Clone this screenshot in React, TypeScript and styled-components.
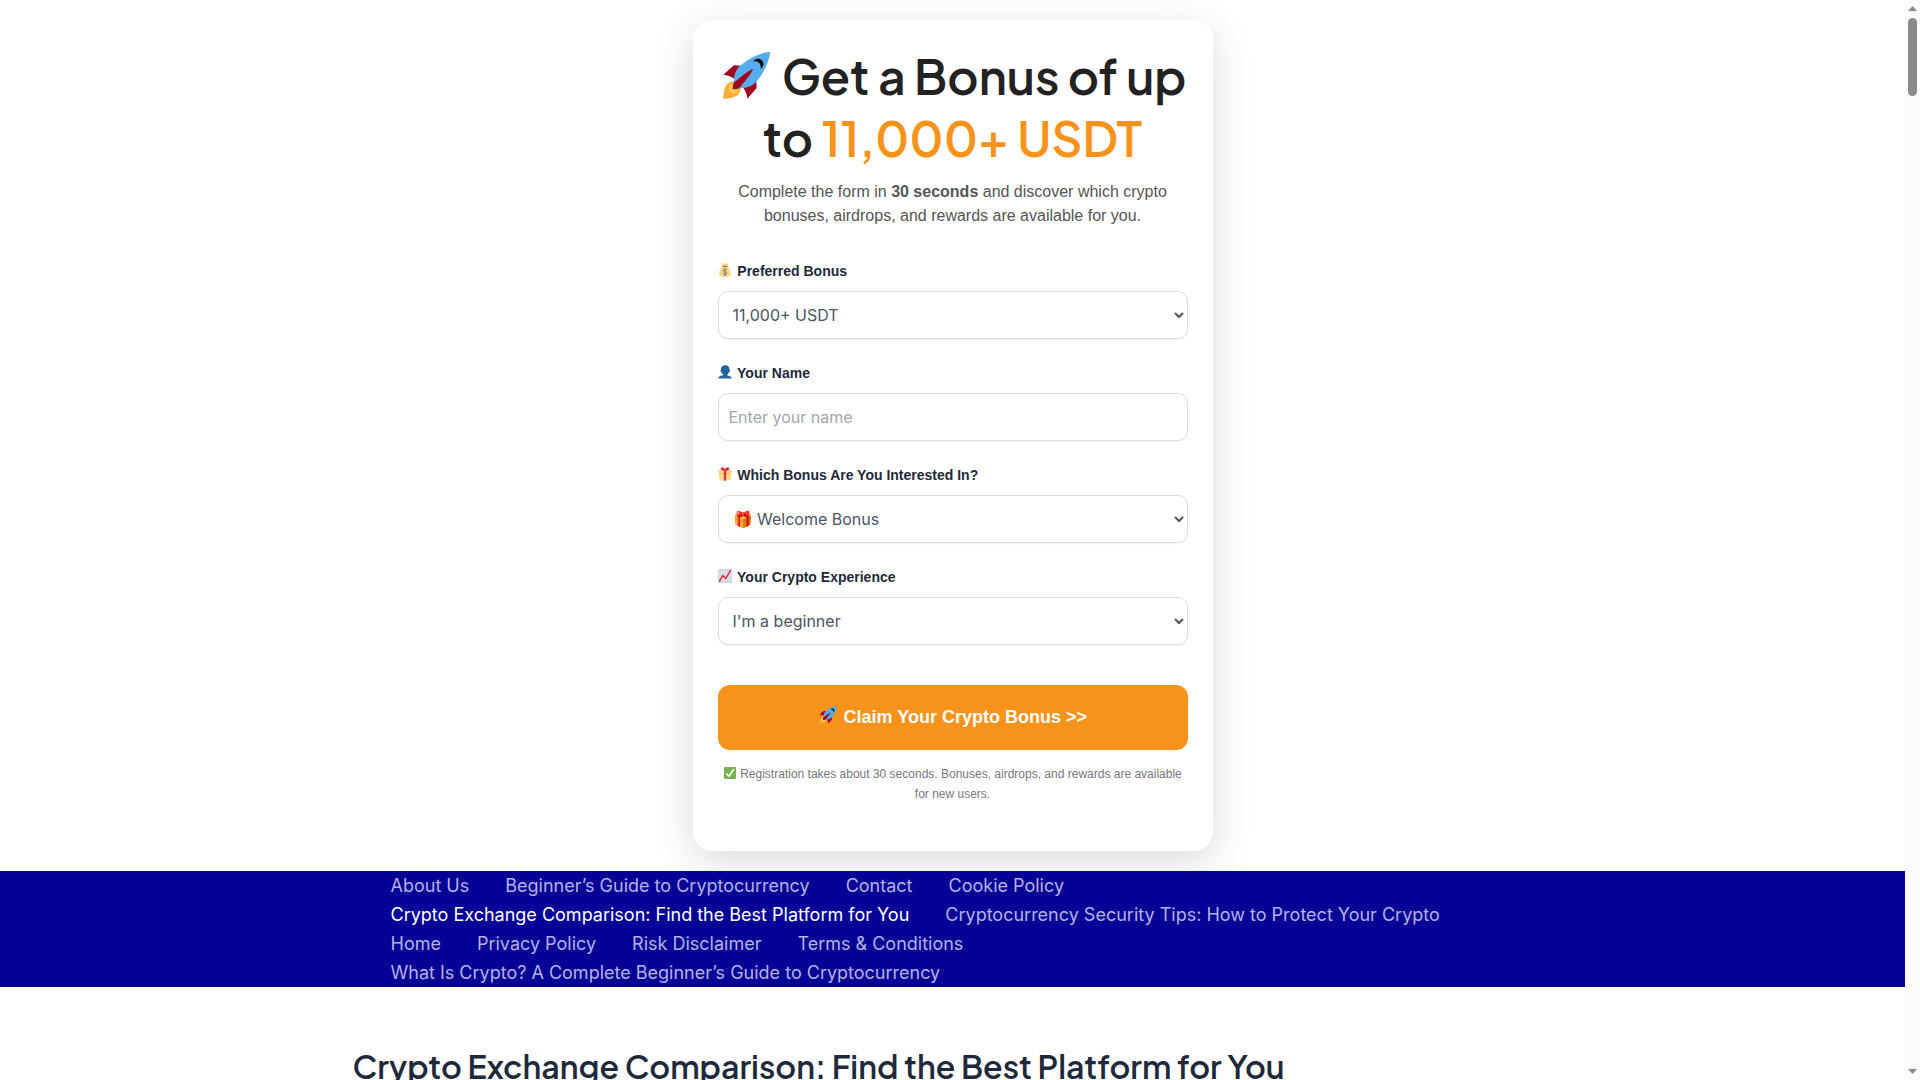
import React from 'react';
import styled, { createGlobalStyle } from 'styled-components';

const GlobalStyle = createGlobalStyle`
  *, *::before, *::after { box-sizing: border-box; }
  body { margin: 0; background: #fff; }
`;

const sans = `"Liberation Sans", Arial, sans-serif`;
const inter = `Inter, sans-serif`;
const display = `"Plus Jakarta Sans", Lato, sans-serif`;

const Window = styled.div`
  display: grid;
  grid-template-columns: 1fr 15px;
  height: 100vh;
  overflow: hidden;
`;

const Page = styled.div`
  min-width: 0;
  overflow: hidden;
`;

const ScrollTrack = styled.div`
  display: flex;
  flex-direction: column;
  align-items: center;
  background: #fcfcfc;
  padding: 6px 0;
`;

const ScrollThumb = styled.div`
  width: 9px;
  height: 78px;
  margin-top: 7px;
  border-radius: 5px;
  background: #8b8b8b;
`;

const ScrollArrow = styled.svg<{ $end?: boolean }>`
  width: 9px;
  height: 5px;
  fill: #8b8b8b;
  margin-top: ${(p) => (p.$end ? 'auto' : '0')};
`;

const Card = styled.form`
  width: 100%;
  max-width: 520px;
  margin: 20px auto;
  padding: 25px 25px 47px;
  border-radius: 20px;
  background: #fff;
  box-shadow: 0 10px 40px rgba(0, 0, 0, 0.15);
  font-family: ${sans};
`;

const Title = styled.h1`
  margin: 0 0 11px;
  font: 600 48px/62px ${display};
  color: #222;
  text-align: center;
`;

const Amount = styled.span`
  color: #f7931a;
`;

const Intro = styled.p`
  margin: 0 0 31px;
  font-size: 16px;
  line-height: 24px;
  color: #555;
  text-align: center;
`;

const Fields = styled.div`
  display: flex;
  flex-direction: column;
  gap: 22px;
`;

const Field = styled.div`
  display: flex;
  flex-direction: column;
  gap: 8px;
`;

const Label = styled.label`
  font-size: 14px;
  line-height: 24px;
  font-weight: 700;
  color: #1e293b;
`;

const Select = styled.select`
  width: 100%;
  height: 48px;
  padding: 0 10px;
  border: 1px solid #ddd;
  border-radius: 10px;
  background: #fff;
  font: 400 16px/24px ${inter};
  color: #4b5563;
  box-shadow: 0 1px 2px rgba(0, 0, 0, 0.05);
`;

const Input = styled.input`
  width: 100%;
  height: 48px;
  padding: 0 10px;
  border: 1px solid #ddd;
  border-radius: 10px;
  background: #fff;
  font: 400 16px/24px ${inter};
  color: #4b5563;
  box-shadow: 0 1px 2px rgba(0, 0, 0, 0.05);

  &::placeholder { color: #a3a7ad; }
`;

const Claim = styled.button`
  display: block;
  width: 100%;
  height: 65px;
  margin: 40px 0 14px;
  padding: 0 6px 2px;
  border: 0;
  border-radius: 12px;
  background: #f7931a;
  font: 700 18px/24px ${sans};
  color: #fff;
`;

const Note = styled.p`
  margin: 0;
  font-size: 12px;
  line-height: 20px;
  color: #777;
  text-align: center;
`;

const Nav = styled.nav`
  background: #060097;
`;

const NavList = styled.ul`
  display: flex;
  flex-wrap: wrap;
  column-gap: 36px;
  max-width: 1200px;
  margin: 0 auto;
  padding: 0 38px;
  list-style: none;
`;

const NavLink = styled.a<{ $current?: boolean }>`
  display: block;
  font: 400 18px/29px ${inter};
  color: ${(p) => (p.$current ? '#fff' : '#b4b2e0')};
  text-decoration: none;
`;

const Article = styled.main`
  max-width: 1200px;
  margin: 0 auto;
  padding-top: 58px;
`;

const ArticleTitle = styled.h2`
  margin: 0;
  font: 600 32px/42px ${display};
  color: #1e293b;
`;

const Emoji = styled.svg`
  width: 1em;
  height: 1em;
  margin: 0 0.07em;
  vertical-align: -0.1em;
`;

const Rocket = () => (
  <Emoji viewBox="0 0 36 36" aria-hidden="true">
    <path fill="#A0041E" d="M1 17l8-7 16 1 1 16-7 8s.001-5.999-6-12-12-6-12-6z" />
    <path fill="#FFAC33" d="M.973 35s-.036-7.979 2.985-11S15 21.187 15 21.187 14.999 29 11.999 32c-3 3-11.026 3-11.026 3z" />
    <circle fill="#FFCC4D" cx="8.999" cy="27" r="4" />
    <path fill="#55ACEE" d="M35.999 0s-10 0-22 10c-6 5-6 14-4 16s11 2 16-4c10-12 10-22 10-22z" />
    <path d="M26.999 5c-1.623 0-3.013.971-3.641 2.36.502-.227 1.055-.36 1.641-.36 2.209 0 4 1.791 4 4 0 .586-.133 1.139-.359 1.64 1.389-.627 2.359-2.017 2.359-3.64 0-2.209-1.791-4-4-4z" />
    <path fill="#A0041E" d="M8 28s0-4 1-5 13.001-10.999 14-10-9.001 13-10.001 14S8 28 8 28z" />
  </Emoji>
);

const MoneyBag = () => (
  <Emoji viewBox="0 0 36 36" aria-hidden="true">
    <path fill="#FDD888" d="M12 9L9 2c0-1 3 0 4.500 0S16 0 18 0s3 2 4.500 2S27 1 27 2l-3 7c6 3 9 11 9 18 0 6-4 9-9 9H12c-5 0-9-3-9-9 0-7 3-15 9-18z" />
    <path fill="#BF6952" d="M11 9c0-1 .5-2 2-2h10c1.500 0 2 1 2 2s-.5 1.500-2 1.500H13c-1.500 0-2-.5-2-1.500z" />
    <path fill="none" stroke="#67757F" strokeWidth="2.400" strokeLinecap="round" d="M22.500 18c-1-1.500-2.500-2-4.500-2-2.500 0-4.500 1.300-4.500 3.500 0 4.500 9.500 2 9.500 7 0 2.300-2.300 3.500-5 3.500-2.300 0-4-.8-5-2.500M18 13.500v19" />
  </Emoji>
);

const Person = () => (
  <Emoji viewBox="0 0 36 36" aria-hidden="true">
    <path fill="#226699" d="M24 26.799v-2.566c2-1.348 4.080-3.779 4.703-6.896.186.103.206.17.413.17.991 0 1.709-1.287 1.709-2.873 0-1.562-.823-2.827-1.794-2.865.187-.674.293-1.577.293-2.735C29.324 5.168 26 .527 18.541.527c-6.629 0-10.777 4.641-10.777 8.507 0 1.123.069 2.043.188 2.755-.911.137-1.629 1.352-1.629 2.845 0 1.587.804 2.873 1.796 2.873.206 0 .025-.067.209-.17C8.952 20.453 11 22.885 13 24.232v2.414c-5 .645-12 3.437-12 6.230v1.061C1 35 2.076 35 3.137 35h29.725C33.924 35 35 35 35 33.938v-1.061c0-2.615-6-5.225-11-6.078z" />
  </Emoji>
);

const Gift = () => (
  <Emoji viewBox="0 0 36 36" aria-hidden="true">
    <path fill="#FDD888" d="M33 31c0 2.200-1.800 4-4 4H7c-2.200 0-4-1.800-4-4V14h30v17z" />
    <path fill="#FCAB40" d="M3 15h30v3H3z" />
    <path fill="#FDD888" d="M36 13c0 2-1 3-3 3H3c-2 0-3-1-3-3v-1c0-2 1-4 3-4h30c2 0 3 2 3 4v1z" />
    <path fill="#DA2F47" d="M15 8h6v27h-6z" />
    <path fill="#DA2F47" d="M17 9c-4 1-9 0-10-3-1-4 3-6 6-5 3 1 5 4 5 8 0-4 2-7 5-8 3-1 7 1 6 5-1 3-6 4-10 3h-2z" />
    <path fill="#A0041E" d="M16 8c0-2-1-4-3-4-1 0-2 1-1 2s2 2 4 2zM20 8c0-2 1-4 3-4 1 0 2 1 1 2s-2 2-4 2z" />
  </Emoji>
);

const Chart = () => (
  <Emoji viewBox="0 0 36 36" aria-hidden="true">
    <rect width="36" height="36" rx="4" fill="#CCD6DD" />
    <path stroke="#E1E8ED" strokeWidth="2" d="M8 1v34M15 1v34M22 1v34M29 1v34M1 8h34M1 15h34M1 22h34M1 29h34" />
    <path fill="none" stroke="#DD2E44" strokeWidth="4" strokeLinecap="round" strokeLinejoin="round" d="M4 31l8-14 8 7L32 4" />
  </Emoji>
);

const Check = () => (
  <Emoji viewBox="0 0 36 36" aria-hidden="true">
    <rect width="36" height="36" rx="4" fill="#77B255" />
    <path fill="#FFF" d="M29.280 6.362c-1.156-.751-2.704-.422-3.458.736L14.936 23.877l-5.029-4.650c-1.014-.938-2.596-.875-3.533.138-.937 1.014-.875 2.596.139 3.533l7.209 6.666c.48.445 1.090.665 1.696.665.673 0 1.534-.282 2.099-1.139.332-.506 12.500-19.270 12.500-19.270.751-1.159.421-2.707-.737-3.458z" />
  </Emoji>
);

const links = [
  'About Us',
  'Beginner’s Guide to Cryptocurrency',
  'Contact',
  'Cookie Policy',
  'Crypto Exchange Comparison: Find the Best Platform for You',
  'Cryptocurrency Security Tips: How to Protect Your Crypto',
  'Home',
  'Privacy Policy',
  'Risk Disclaimer',
  'Terms & Conditions',
  'What Is Crypto? A Complete Beginner’s Guide to Cryptocurrency',
];
const currentPage = links[4];

export default function App() {
  return (
    <Window>
      <GlobalStyle />
      <Page>
        <Card onSubmit={(e) => e.preventDefault()}>
          <Title>
            <Rocket /> Get a Bonus of up to <Amount>11,000+ USDT</Amount>
          </Title>
          <Intro>
            Complete the form in <strong>30 seconds</strong> and discover which crypto bonuses,
            airdrops, and rewards are available for you.
          </Intro>
          <Fields>
            <Field>
              <Label htmlFor="amount"><MoneyBag /> Preferred Bonus</Label>
              <Select id="amount"><option>11,000+ USDT</option></Select>
            </Field>
            <Field>
              <Label htmlFor="name"><Person /> Your Name</Label>
              <Input id="name" type="text" placeholder="Enter your name" />
            </Field>
            <Field>
              <Label htmlFor="kind"><Gift /> Which Bonus Are You Interested In?</Label>
              <Select id="kind"><option>🎁 Welcome Bonus</option></Select>
            </Field>
            <Field>
              <Label htmlFor="experience"><Chart /> Your Crypto Experience</Label>
              <Select id="experience"><option>I'm a beginner</option></Select>
            </Field>
          </Fields>
          <Claim type="submit"><Rocket /> Claim Your Crypto Bonus &gt;&gt;</Claim>
          <Note>
            <Check /> Registration takes about 30 seconds. Bonuses, airdrops, and rewards are
            available for new users.
          </Note>
        </Card>
        <Nav>
          <NavList>
            {links.map((text) => (
              <li key={text}>
                <NavLink href="#" $current={text === currentPage}>{text}</NavLink>
              </li>
            ))}
          </NavList>
        </Nav>
        <Article>
          <ArticleTitle>{currentPage}</ArticleTitle>
        </Article>
      </Page>
      <ScrollTrack aria-hidden="true">
        <ScrollArrow viewBox="0 0 9 5"><path d="M0 5L4.500 0L9 5z" /></ScrollArrow>
        <ScrollThumb />
        <ScrollArrow viewBox="0 0 9 5" $end><path d="M0 0h9L4.500 5z" /></ScrollArrow>
      </ScrollTrack>
    </Window>
  );
}
